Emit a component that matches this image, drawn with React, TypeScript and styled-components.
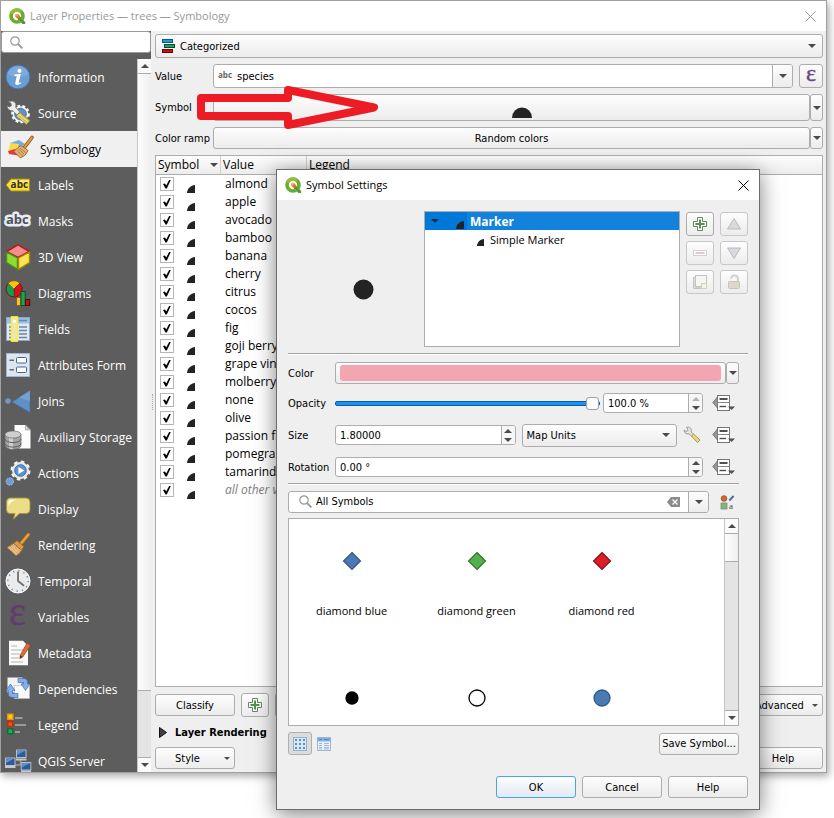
import React from "react";
import styled, { createGlobalStyle, css } from "styled-components";

const humanist = `"Open Sans", "Noto Sans", sans-serif`;
const compact = `"DejaVu Sans Condensed", "Noto Sans", sans-serif`;

const GlobalStyle = createGlobalStyle`
  *, *::before, *::after { box-sizing: border-box; }
  body { margin: 0; background: #fff; }
  body, button, input, select { font-family: ${compact}; font-size: 11px; color: #000; }
  button, input, select { margin: 0; padding: 0; }
  svg { display: block; flex: none; overflow: visible; }
`;

const edge = "#adadad";
const face = "linear-gradient(#fdfdfd, #ececec)";

/* ---------- windows ---------- */

const Desktop = styled.div`
  position: relative;
  height: 100vh;
  min-height: 680px;
  padding: 0 7px 45px 0;
  overflow: hidden;
`;

const MainWindow = styled.main`
  display: flex;
  flex-direction: column;
  height: 100%;
  border: 1px solid #a0a0a0;
  background: #efefef;
  box-shadow: 2px 3px 8px rgba(0, 0, 0, 0.35);
`;

const Dialog = styled.section`
  position: absolute;
  left: 276px;
  right: 74px;
  top: 169px;
  bottom: 8px;
  min-width: 484px;
  display: flex;
  flex-direction: column;
  border: 1px solid #6c6c6c;
  background: #efefef;
  box-shadow: 0 4px 20px rgba(0, 0, 0, 0.5);
`;

const TitleBar = styled.header<{ $muted?: boolean }>`
  display: flex;
  align-items: center;
  gap: 4px;
  height: 30px;
  flex: none;
  padding: 0 10px 0 8px;
  background: #fff;
  color: ${(p) => (p.$muted ? "#999" : "#000")};
`;

const Title = styled.h1`
  flex: 1;
  margin: 0;
  font-family: ${humanist};
  font-size: 11px;
  line-height: 14px;
  font-weight: 400;
`;

const CloseButton = styled.button`
  border: 0;
  background: none;
  color: inherit;
`;

const Columns = styled.div`
  display: flex;
  flex: 1;
  min-height: 0;
`;

/* ---------- shared controls ---------- */

const Button = styled.button<{ $width?: number; $height?: number; $primary?: boolean }>`
  display: flex;
  align-items: center;
  justify-content: center;
  flex: none;
  width: ${(p) => p.$width ?? 80}px;
  height: ${(p) => p.$height ?? 22}px;
  border: 1px solid ${(p) => (p.$primary ? "#4aa5ee" : edge)};
  border-radius: 3px;
  background: ${(p) => (p.$primary ? "linear-gradient(#fdfdfd, #e2eaf2)" : face)};
  white-space: nowrap;
`;

const MenuButton = styled(Button)`
  padding: 0 4px 0 19px;
  justify-content: space-between;
`;

const WideButton = styled(Button)<{ $tall?: boolean }>`
  flex: 1;
  width: auto;
  height: ${(p) => (p.$tall ? 27 : 22)}px;
  align-items: ${(p) => (p.$tall ? "flex-end" : "center")};
  padding: ${(p) => (p.$tall ? "0 0 2px 20px" : "0")};
`;

const DropButton = styled(Button)<{ $tall?: boolean }>`
  width: 13px;
  height: ${(p) => (p.$tall ? 27 : 22)}px;
`;

const IconButton = styled(Button)`
  width: 28px;
  height: 24px;
  &:disabled { border-color: #c8c8c8; }
`;

const FlatButton = styled.button<{ $on?: boolean }>`
  display: flex;
  align-items: center;
  justify-content: center;
  width: 24px;
  height: 23px;
  flex: none;
  border: 1px solid ${(p) => (p.$on ? "#b0b0b0" : "transparent")};
  border-radius: 3px;
  background: ${(p) => (p.$on ? "#dcdcdc" : "none")};
`;

const Frame = styled.div<{ $field?: boolean; $height?: number; $inset?: number }>`
  display: flex;
  align-items: center;
  gap: 4px;
  flex: 1;
  min-width: 0;
  height: ${(p) => p.$height ?? 24}px;
  padding-left: ${(p) => p.$inset ?? 4}px;
  border: 1px solid ${edge};
  border-radius: 3px;
  background: ${(p) => (p.$field ? "#fff" : face)};
  overflow: hidden;
`;

const plainField = css`
  flex: 1;
  min-width: 0;
  height: 100%;
  border: 0;
  outline: 0;
  background: none;
`;

const TextInput = styled.input`${plainField}`;
const Select = styled.select`${plainField} appearance: none;`;

const FieldDrop = styled.button`
  display: flex;
  align-items: center;
  justify-content: center;
  width: 20px;
  height: 100%;
  border: 0;
  border-left: 1px solid ${edge};
  background: ${face};
`;

const ClearButton = styled.button`
  padding-right: 4px;
  border: 0;
  background: none;
`;

const CaretSlot = styled.span`
  padding-right: 6px;
  pointer-events: none;
`;

const Rule = styled.hr`
  flex: none;
  width: 100%;
  height: 2px;
  margin: 0;
  border: 0;
  border-top: 1px solid #a0a0a0;
  background: #fff;
`;

const Caret = ({ up, color = "#4a4a4a", size = 8 }: { up?: boolean; color?: string; size?: number }) => (
  <svg width={size} height={size / 2} viewBox="0 0 8 4" aria-hidden>
    <path d={up ? "M0 4L4 0L8 4Z" : "M0 0H8L4 4Z"} fill={color} />
  </svg>
);

const Cross = () => (
  <svg width="11" height="11" viewBox="0 0 11 11" aria-hidden>
    <path d="M.5 .5L10.5 10.5M10.5 .5L.5 10.5" stroke="currentColor" fill="none" />
  </svg>
);

const Magnifier = () => (
  <svg width="13" height="13" viewBox="0 0 13 13" fill="none" stroke="#999" aria-hidden>
    <circle cx="5" cy="5" r="4.2" strokeWidth="1.2" />
    <path d="M8 8L12.4 12.4" strokeWidth="1.8" />
  </svg>
);

const Logo = () => (
  <svg width="17" height="17" viewBox="0 0 17 17" aria-hidden>
    <circle cx="8" cy="8" r="6" fill="none" stroke="#6aaa35" strokeWidth="3.6" />
    <path d="M2.4 5.6A6 6 0 0 1 12 3.6" fill="none" stroke="#93bd3c" strokeWidth="3.4" />
    <path d="M7 7L9.5 7L16.5 14.5V16.2H13.5L8 10Z" fill="#fff" />
    <path d="M9 8.7L11.3 8.7L16.2 14V16H13.5L9 11.2Z" fill="#589632" />
    <path d="M6.4 6.2H9.4L11.2 8.4L9 11L6.4 9Z" fill="#ee7913" />
    <path d="M6.4 6.2H8.4V8.2H6.4Z" fill="#f8b25c" />
  </svg>
);

const Plus = () => (
  <svg width="16" height="16" viewBox="0 0 16 16" aria-hidden>
    <path d="M5.5 1.5H10.5V5.5H14.5V10.5H10.5V14.5H5.5V10.5H1.5V5.5H5.5Z" fill="#fff" stroke="#5b8c5a" />
    <path d="M8 3.5V12.5M3.5 8H12.5" stroke="#5b8c5a" strokeWidth="2" />
  </svg>
);

const QuarterDot = ({ size = 8 }: { size?: number }) => (
  <svg width={size} height={size} viewBox="0 0 8 8" aria-hidden>
    <path d="M0 8C.3 3.8 3 .6 8 0V8Z" fill="#232323" />
  </svg>
);

/* ---------- sidebar ---------- */

const Sidebar = styled.aside`
  display: flex;
  flex-direction: column;
  width: 150px;
  flex: none;
  background: #5d5d5d;
`;

const SearchBox = styled.label`
  display: flex;
  align-items: center;
  gap: 6px;
  height: 22px;
  margin-bottom: 6px;
  padding-left: 8px;
  flex: none;
  background: #fff;
  border: 1px solid #9a9a9a;
  border-radius: 3px;
`;

const NavArea = styled.div`
  display: flex;
  flex: 1;
  min-height: 0;
`;

const NavList = styled.nav`
  flex: 1;
  overflow: hidden;
`;

const NavItem = styled.a<{ $active?: boolean }>`
  display: flex;
  align-items: center;
  gap: 7px;
  height: 36px;
  padding-left: 4px;
  font-family: ${humanist};
  font-size: 12px;
  text-decoration: none;
  white-space: nowrap;
  color: ${(p) => (p.$active ? "#000" : "#fff")};
  background: ${(p) => (p.$active ? "#f0f0f0" : "none")};
`;

const ScrollBar = styled.div`
  display: flex;
  flex-direction: column;
  width: 14px;
  flex: none;
  background: #e4e4e4;
  border-left: 1px solid #c6c6c6;
`;

const ScrollEnd = styled.button`
  display: flex;
  align-items: center;
  justify-content: center;
  height: 14px;
  flex: none;
  border: 0;
  background: #fafafa;
`;

const Thumb = styled.div<{ $share: number }>`
  flex: ${(p) => p.$share};
  border: solid ${edge};
  border-width: 1px 0;
  background: linear-gradient(90deg, #fdfdfd, #efefef);
`;

const Track = styled.div<{ $share: number }>`
  flex: ${(p) => p.$share};
  border-bottom: 1px solid ${edge};
`;

const art: Record<string, React.ReactNode> = {
  Information: (
    <>
      <circle cx="13" cy="13" r="12" fill="#6b9fd4" stroke="#3f72ad" />
      <path d="M2.5 10A11 11 0 0 1 23.5 10C17 14 9 14 2.5 10Z" fill="#8ab4e0" opacity=".6" />
      <circle cx="14.5" cy="6.8" r="2.1" fill="#fff" />
      <path d="M9.5 10.5L15.8 10L13.8 18.2Q13.6 19.5 16.3 18.2L16 19.5Q11.5 22 10.3 20Q10 19.3 11.8 12.3L9.2 11.7Z" fill="#fff" />
    </>
  ),
  Source: (
    <>
      <circle cx="15.5" cy="14" r="7.8" fill="#f0f0f0" stroke="#fff" strokeWidth="3" strokeDasharray="2.6 2.2" />
      <circle cx="15.5" cy="14" r="5.8" fill="#5f90c6" stroke="#47719f" />
      <path d="M2 6Q5 8 6.5 5.5Q7 3 3.5 1.8Q8-.2 10.5 3Q11.2 5 10.6 7.2L14.8 12L12 14.8L7.4 10.6Q3 11 2 6Z" fill="#ececec" stroke="#777" strokeWidth=".7" />
      <path d="M11 16L15 12.5L25 20.5L21.5 24.5Z" fill="#e9d87c" stroke="#8c7b2e" strokeWidth=".8" />
      <path d="M14 16L22 22.5M16 14.5L23.8 20.8" stroke="#b29d46" strokeWidth=".7" />
    </>
  ),
  Symbology: (
    <>
      <path d="M5 7L14 4L20 8L14 13Z" fill="#75aee3" />
      <path d="M5 7L14 8L11 18L3.5 15Z" fill="#f6dc4d" />
      <path d="M3 15L10 13L16 20L4 18Z" fill="#e23b3b" />
      <path d="M27 1.5L19.3 11.6" stroke="#8f5820" strokeWidth="3.6" strokeLinecap="round" />
      <path d="M26.8 1.6L19.3 11.6" stroke="#e29a43" strokeWidth="2" strokeLinecap="round" />
      <path d="M16 9.5L23 14.5Q21 20 15.5 22L9 15.5Q13 11 16 9.5Z" fill="#e3b375" stroke="#9b6728" strokeWidth=".9" />
      <path d="M15 12L20.5 16.5M12 14.5L17.5 20M13.5 13L19 18" stroke="#a56c2c" strokeWidth=".8" />
    </>
  ),
  Labels: (
    <>
      <path d="M1 13L6 7H24.5V19H6Z" fill="#f7df37" stroke="#a58c12" />
      <path d="M5 13L7 8H24V11L6 13Z" fill="#fff" opacity=".35" />
      <text x="5.6" y="16.4" fontSize="10" fontWeight="700" fill="#3a3510" fontFamily="Open Sans, sans-serif">abc</text>
    </>
  ),
  Masks: (
    <text x="1" y="16" fontSize="13" fontWeight="700" fill="#4e535b" stroke="#e9ecf5" strokeWidth="5" strokeLinejoin="round" paintOrder="stroke" fontFamily="Open Sans, sans-serif">abc</text>
  ),
  "3D View": (
    <>
      <path d="M13 .8L24.5 7.5L13 13.5L1.5 7.5Z" fill="#f58f8f" stroke="#b11f1f" strokeWidth="1.6" strokeLinejoin="round" />
      <path d="M1.5 8L12.5 14V25.3L1.5 18.5Z" fill="#8edb35" stroke="#4f8f13" strokeWidth="1.4" strokeLinejoin="round" />
      <path d="M24.5 8L13.5 14V25.3L24.5 18.5Z" fill="#fbe650" stroke="#a8870f" strokeWidth="1.4" strokeLinejoin="round" />
    </>
  ),
  Diagrams: (
    <>
      <circle cx="9" cy="9" r="8" fill="#159c4c" stroke="#7d1010" />
      <path d="M9 9L3.2 3.2A8.2 8.2 0 0 1 14.8 3.2Z" fill="#f9c40f" stroke="#8a6c08" strokeWidth=".7" />
      <path d="M9 9L14.8 3.2A8.2 8.2 0 0 1 9.5 17.2Z" fill="#d21414" stroke="#7d1010" strokeWidth=".7" />
      <rect x="11.5" y="17.5" width="4.2" height="8" fill="#f4c430" stroke="#9b5a10" />
      <rect x="16" y="11.5" width="4.2" height="14" fill="#1aa352" stroke="#0d4f28" />
      <rect x="20.5" y="19.5" width="4.2" height="6" fill="#b51414" stroke="#5c0909" />
    </>
  ),
  Fields: (
    <>
      <rect x="1.5" y="1.5" width="23" height="23" fill="#e3e8ee" stroke="#8ba7c4" />
      <rect x="2" y="2" width="22" height="5.5" fill="#9cc0e2" />
      <path d="M14 4.5H22M4 11H6.5M4 14.5H6.5M4 18H6.5M4 21.5H6.5M14 11H22M14 14.5H22M14 18H22M14 21.5H22" stroke="#6888ab" strokeWidth="1.4" />
      <rect x="6.5" y=".8" width="6" height="24.4" fill="#f0e8a9" stroke="#f7ee3d" strokeWidth="1.4" />
      <rect x="8" y="4" width="3" height="2.6" fill="#fff" />
    </>
  ),
  "Attributes Form": (
    <>
      <rect x="1.5" y="1.5" width="23" height="23" fill="#dfe5ec" stroke="#9eb9d6" />
      <rect x="11.5" y="5.5" width="10" height="5.5" rx="1" fill="#fff" stroke="#42698f" />
      <rect x="11.5" y="15" width="10" height="5.5" rx="1" fill="#fff" stroke="#42698f" />
      <path d="M4.5 8.2H9M4.5 17.8H9" stroke="#5d6c7c" strokeWidth="1.6" />
    </>
  ),
  Joins: (
    <>
      <path d="M7 14L25 2.5V24.5Z" fill="#5f91c8" stroke="#43709f" strokeWidth=".7" />
      <path d="M14 9.5L25 2.5V13Z" fill="#83abd7" opacity=".6" />
      <circle cx="3" cy="13" r="2.8" fill="#7197c2" />
    </>
  ),
  "Auxiliary Storage": (
    <>
      <path d="M9.5 1H20.5L25.5 6V24.5H9.5Z" fill="#fcfcfc" />
      <path d="M20.5 1V6H25.5Z" fill="#c9c9c9" stroke="#888" strokeWidth=".5" />
      <path d="M0 10.5V21.5A8 3.8 0 0 0 16 21.5V10.5Z" fill="#a3a3a3" stroke="#666" strokeWidth=".7" />
      <path d="M4 12V24.4Q6 25.5 8 25.2V13Z" fill="#d8d8d8" opacity=".8" />
      <ellipse cx="8" cy="10.5" rx="8" ry="3.6" fill="#cfcfcf" stroke="#6b6b6b" strokeWidth=".7" />
      <path d="M0 15A8 3.6 0 0 0 16 15M0 19.5A8 3.6 0 0 0 16 19.5" fill="none" stroke="#606060" />
    </>
  ),
  Actions: (
    <>
      <circle cx="15.5" cy="10.5" r="8.4" fill="#e9e9e9" stroke="#f2f2f2" strokeWidth="3.2" strokeDasharray="3.4 3.2" />
      <circle cx="15.5" cy="10.5" r="8" fill="#e8e8e8" />
      <circle cx="15.5" cy="10.5" r="5.8" fill="#5d93cf" stroke="#426d9e" />
      <path d="M13.4 6.9L19.4 10.5L13.4 14.1Z" fill="#fff" />
      <circle cx="4.8" cy="21.5" r="3.7" fill="#6f9ecf" stroke="#bccde0" strokeDasharray="1.5 1.2" />
    </>
  ),
  Display: (
    <>
      <path d="M5 2H21Q25 2 25 6V13.5Q25 17.5 21 17.5H14.5L8.5 23L10 17.5H5Q1.5 17.5 1.5 13.5V6Q1.5 2 5 2Z" fill="#ecdd87" stroke="#aa9535" strokeWidth=".9" />
      <path d="M3.5 10V6.5Q3.5 3.8 6 3.8H12Q5 5 3.5 10Z" fill="#fff" />
    </>
  ),
  Rendering: (
    <>
      <path d="M23.5 2.5L15.5 12" stroke="#a7691a" strokeWidth="3.8" strokeLinecap="round" />
      <path d="M23.3 2.7L15.5 12" stroke="#eda036" strokeWidth="2.4" strokeLinecap="round" />
      <path d="M12 8.5L19 14.5L16.5 18.5L8.5 11.5Z" fill="#dc9a44" stroke="#945d18" strokeWidth=".8" />
      <path d="M8.5 11.5L16.5 18.5Q14.5 22 11 23.8L2 15.5Z" fill="#e9bd83" stroke="#a16c2a" strokeWidth=".8" />
      <path d="M5 14L13 21.5M7 12.5L14.8 19.8M4 17L10 22" stroke="#b88247" strokeWidth=".8" strokeDasharray="1 1" />
    </>
  ),
  Temporal: (
    <>
      <circle cx="13" cy="13" r="12" fill="#ebebeb" stroke="#fafafa" />
      <circle cx="13" cy="13" r="10.2" fill="none" stroke="#6a93bd" strokeWidth="1.6" strokeDasharray="1.3 4.04" />
      <path d="M13 3.5V13L19 17.8" fill="none" stroke="#707070" strokeWidth="1.8" />
    </>
  ),
  Variables: (
    <text x="4" y="21" fontSize="40" fill="#603d6c" stroke="#603d6c" strokeWidth=".6" fontFamily="Liberation Serif, serif">ε</text>
  ),
  Metadata: (
    <>
      <path d="M4 .8H18L23 6V25.2H4Z" fill="#fafafa" />
      <path d="M6 6H12M6 10H19M6 14H15M6 18H14M6 22H18" stroke="#b3b3b3" strokeWidth="1.2" />
      <path d="M22 3L25.5 5.5L17.7 17L14.8 18.5L15.4 15Z" fill="#e06d33" stroke="#97401a" strokeWidth=".7" />
      <path d="M14.8 18.5L15.4 15L17.7 17Z" fill="#4b3a30" />
    </>
  ),
  Dependencies: (
    <>
      <rect x="2.5" y="1.5" width="15" height="15" fill="#f3f3f3" />
      <rect x="9.5" y="9.5" width="15" height="13" fill="#fafafa" stroke="#bdbdbd" strokeWidth=".6" />
      <path d="M13 2.5H19Q22.5 2.5 22.5 6V8H25L20.5 14.5L16 8H18.5V6.5H13Z" fill="#84aee8" stroke="#4477b9" strokeWidth=".7" />
      <path d="M13 21.5H8Q3.5 21.5 3.5 18V14.5H1L5.5 8L10 14.5H7.5V17.5H13Z" fill="#84aee8" stroke="#4477b9" strokeWidth=".7" />
    </>
  ),
  Legend: (
    <>
      <rect x="2.8" y="2.2" width="5" height="5" fill="#fbd500" stroke="#f39a13" strokeWidth="1.4" />
      <rect x="2.8" y="9.5" width="5" height="5" fill="#fa4b18" stroke="#c02e06" strokeWidth="1.4" />
      <rect x="2.8" y="16.8" width="5" height="5" fill="#16b45b" stroke="#087237" strokeWidth="1.4" />
      <path d="M10 6H17.5M10 13H21M10 20H15" stroke="#9a9a9a" strokeWidth="1.8" />
    </>
  ),
  "QGIS Server": (
    <>
      <path d="M15.5 11V17M5 17H21" stroke="#9a9a9a" strokeWidth="1.4" />
      <rect x="11.5" y="2" width="9.5" height="7.5" fill="#2c5a9a" stroke="#b7bfc8" />
      <rect x="0.5" y="10" width="9.5" height="7.5" fill="#2c5a9a" stroke="#b7bfc8" />
      <rect x="16.3" y="14.5" width="9.5" height="7.5" fill="#2c5a9a" stroke="#b7bfc8" />
      <path d="M12 2.5H20.5L12 7ZM1 10.5H9.5L1 15ZM16.8 15H25.3L16.8 19.5Z" fill="#5e90cd" />
      <path d="M11 11.5H21.5M0 19H10.5M16 23.5H26" stroke="#c9c9c9" strokeWidth="2" />
    </>
  ),
};

const NavIcon = ({ name }: { name: string }) => {
  const width = name === "Symbology" ? 28 : 26;
  return (
    <svg width={width} height="26" viewBox={`0 0 ${width} 26`} aria-hidden>
      {art[name]}
    </svg>
  );
};

/* ---------- properties pane ---------- */

const Splitter = styled.div`
  display: flex;
  align-items: center;
  width: 4px;
  flex: none;
  &::after {
    content: "";
    height: 16px;
    margin-left: 1px;
    border-left: 1px dotted #aaa;
  }
`;

const Pane = styled.div`
  display: flex;
  flex-direction: column;
  gap: 6px;
  flex: 1;
  min-width: 0;
  padding: 3px;
  padding-left: 0;
`;

const FormRow = styled.div<{ $gap?: number }>`
  display: flex;
  align-items: center;
  gap: ${(p) => p.$gap ?? 6}px;
  flex: none;
`;

const Caption = styled.label`
  width: 58px;
  flex: none;
  white-space: nowrap;
`;

const FormField = styled.div<{ $gap?: number }>`
  display: flex;
  gap: ${(p) => p.$gap ?? 0}px;
  flex: 1;
  min-width: 0;
`;

const CategoryBox = styled.div`
  flex: 1;
  min-height: 0;
  overflow: hidden;
  border: 1px solid ${edge};
  background: #fff;
`;

const CategoryTable = styled.table`
  width: 100%;
  border-collapse: separate;
  border-spacing: 0;
  table-layout: fixed;
  font-family: ${humanist};
  font-size: 12px;
`;

const HeadCell = styled.th<{ $width?: number }>`
  width: ${(p) => (p.$width ? `${p.$width}px` : "auto")};
  height: 19px;
  padding: 0 2px;
  font-weight: 400;
  text-align: left;
  line-height: 18px;
  background: ${face};
  border-bottom: 1px solid ${edge};
  border-right: 1px solid #cfcfcf;
  &:last-child { border-right: 0; }
`;

const SortHead = styled.div`
  display: flex;
  align-items: center;
  justify-content: space-between;
`;

const Cell = styled.td<{ $other?: boolean }>`
  height: 18px;
  padding: 0 0 0 4px;
  line-height: 18px;
  white-space: nowrap;
  color: ${(p) => (p.$other ? "#808080" : "#000")};
  font-style: ${(p) => (p.$other ? "italic" : "normal")};
`;

const SymbolCell = styled.div`
  display: flex;
  align-items: flex-end;
  gap: 13px;
  height: 18px;
`;

const Check = styled.input`
  appearance: none;
  display: grid;
  place-items: center;
  width: 14px;
  height: 14px;
  margin-bottom: 2px;
  border: 1px solid #b5b5b5;
  background: #fff;
  &:checked::after {
    content: "";
    width: 8px;
    height: 9px;
    background: #000;
    clip-path: polygon(0 50%, 25% 45%, 40% 68%, 80% 0, 100% 0, 48% 100%, 32% 100%);
  }
`;

const GroupTitle = styled.button`
  display: flex;
  align-items: center;
  gap: 8px;
  height: 18px;
  flex: none;
  padding-left: 4px;
  border: 0;
  background: none;
  font-weight: 700;
`;

const Spread = styled.div`
  display: flex;
  align-items: center;
  justify-content: space-between;
  flex: none;
`;

/* ---------- dialog ---------- */

const DialogBody = styled.div`
  display: flex;
  flex-direction: column;
  flex: 1;
  min-height: 0;
  padding: 11px;
`;

const Inner = styled.div`
  display: flex;
  flex-direction: column;
  flex: 1;
  min-height: 0;
  padding: 4px 9px 0 0;
`;

const TopArea = styled.div`
  display: flex;
  gap: 6px;
  height: 136px;
  margin-bottom: 6px;
  flex: none;
`;

const Preview = styled.div`
  display: grid;
  place-items: center;
  width: 130px;
  padding: 21px 0 0 21px;
  flex: none;
`;

const Tree = styled.ul`
  flex: 1;
  margin: 0;
  padding: 0;
  list-style: none;
  border: 1px solid ${edge};
  background: #fff;
  font-family: ${humanist};
`;

const TreeItem = styled.li<{ $root?: boolean }>`
  display: flex;
  align-items: center;
  gap: 6px;
  height: 18px;
  padding-left: ${(p) => (p.$root ? 6 : 52)}px;
  background: ${(p) => (p.$root ? "linear-gradient(90deg, #0078d7 42px, #1282dd 42px)" : "none")};
  color: ${(p) => (p.$root ? "#fff" : "#000")};
  font-size: ${(p) => (p.$root ? 12 : 11)}px;
  font-weight: ${(p) => (p.$root ? 700 : 400)};
`;

const TreeGlyph = styled.span<{ $root?: boolean }>`
  display: flex;
  justify-content: flex-end;
  align-items: flex-end;
  height: 18px;
  width: ${(p) => (p.$root ? 19 : 7)}px;
  padding-bottom: ${(p) => (p.$root ? 1 : 2)}px;
`;

const ToolGrid = styled.div`
  display: grid;
  grid-template-columns: 28px 28px;
  gap: 5px 6px;
  align-content: start;
  padding-top: 1px;
`;

const SettingRow = styled.div<{ $short?: boolean }>`
  display: flex;
  align-items: center;
  height: ${(p) => (p.$short ? 28 : 32)}px;
  flex: none;
`;

const SettingLabel = styled.label`
  width: 47px;
  flex: none;
`;

const SettingField = styled.div<{ $gap?: number }>`
  display: flex;
  align-items: center;
  gap: ${(p) => p.$gap ?? 0}px;
  flex: 1;
  min-width: 0;
`;

const Swatch = styled.span`
  flex: 1;
  height: 16px;
  margin: 0 4px;
  border-radius: 3px;
  background: #f4a5b2;
`;

const Slider = styled.input`
  appearance: none;
  flex: 1;
  min-width: 0;
  height: 14px;
  background: none;
  &::-webkit-slider-runnable-track {
    height: 5px;
    border: 1px solid #0d5ca8;
    border-radius: 2px;
    background: #1e90f0;
  }
  &::-webkit-slider-thumb {
    appearance: none;
    width: 13px;
    height: 13px;
    margin-top: -5px;
    border: 1px solid #a0a0a0;
    border-radius: 3px;
    background: #fcfcfc;
  }
`;

const SpinBox = styled(Frame)<{ $fixed?: boolean }>`
  height: 20px;
  flex: ${(p) => (p.$fixed ? "0 0 100px" : "181")};
`;

const UnitBox = styled(Frame)`
  height: 23px;
  flex: 155;
`;

const Steps = styled.span`
  display: flex;
  flex-direction: column;
  width: 14px;
  height: 100%;
  border-left: 1px solid ${edge};
`;

const Step = styled.button`
  display: grid;
  place-items: center;
  flex: 1;
  border: 0;
  background: #f6f6f6;
`;

const OverrideButton = styled.button`
  width: 36px;
  padding-left: 9px;
  border: 0;
  background: none;
  flex: none;
`;

const FilterRow = styled.div`
  display: flex;
  align-items: center;
  gap: 6px;
  margin: 5px 0;
  flex: none;
`;

const Gallery = styled.div`
  display: flex;
  flex: 1;
  min-height: 0;
  border: 1px solid ${edge};
  background: #fff;
`;

const GalleryGrid = styled.div`
  display: grid;
  grid-template-columns: repeat(3, 125px);
  grid-auto-rows: 137px;
  flex: 1;
  min-width: 0;
  overflow: hidden;
  font-family: ${humanist};
`;

const GalleryItem = styled.figure`
  display: flex;
  flex-direction: column;
  align-items: center;
  gap: 31px;
  margin: 0;
  padding-top: 31px;
`;

const GalleryBar = styled(Spread)`
  margin-top: 6px;
`;

const Footer = styled.footer`
  display: flex;
  justify-content: flex-end;
  gap: 6px;
  margin-top: 21px;
  flex: none;
`;

const ViewToggles = styled.div`
  display: flex;
`;

const Arrow = styled.svg`
  position: absolute;
  left: 196px;
  top: 84px;
  pointer-events: none;
`;

const OverrideIcon = () => (
  <svg width="24" height="18" viewBox="0 0 24 18" aria-hidden>
    <path d="M5.5 3L.8 8.5L5.5 14Z" fill="#999" stroke="#777" />
    <rect x="5.5" y="1.5" width="12" height="15" fill="#fff" stroke="#777" />
    <path d="M5.5 8.5H17.5" stroke="#888" />
    <path d="M7.5 5H15.5" stroke="#505050" strokeWidth="2" />
    <path d="M7.5 12.5H14" stroke="#505050" strokeWidth="1.4" />
    <path d="M16 12.5H23L19.5 16Z" fill="#505050" />
  </svg>
);

const Epsilon = () => (
  <svg width="14" height="16" viewBox="0 0 14 16" aria-hidden>
    <text x="2" y="13" fontSize="24" fill="#6d4481" stroke="#6d4481" strokeWidth=".4" fontFamily="Liberation Serif, serif">ε</text>
  </svg>
);

const Spin = ({ id, value, fixed, dim }: { id: string; value: string; fixed?: boolean; dim?: boolean }) => (
  <SpinBox $field $fixed={fixed}>
    <TextInput id={id} defaultValue={value} />
    <Steps>
      <Step aria-label="Increase"><Caret up color={dim ? "#b4b4b4" : "#4a4a4a"} /></Step>
      <Step aria-label="Decrease"><Caret /></Step>
    </Steps>
  </SpinBox>
);

const Override = () => (
  <OverrideButton aria-label="Data defined override"><OverrideIcon /></OverrideButton>
);

const values = [
  "almond", "apple", "avocado", "bamboo", "banana", "cherry", "citrus", "cocos", "fig",
  "goji berry", "grape vine", "molberry", "none", "olive", "passion fruit", "pomegranate",
  "tamarind", "all other values",
];

const symbols = [
  { id: 1, label: "diamond blue", fill: "#4a7ab5", stroke: "#325780" },
  { id: 2, label: "diamond green", fill: "#54b04a", stroke: "#357230" },
  { id: 3, label: "diamond red", fill: "#db1e2a", stroke: "#801119" },
  { id: 4, fill: "#000", stroke: "#000", r: 6 },
  { id: 5, fill: "#fff", stroke: "#000", r: 8 },
  { id: 6, fill: "#487bb6", stroke: "#325780", r: 8 },
];

export default function App() {
  return (
    <Desktop>
      <GlobalStyle />
      <MainWindow>
        <TitleBar $muted>
          <Logo />
          <Title>Layer Properties — trees — Symbology</Title>
          <CloseButton aria-label="Close"><Cross /></CloseButton>
        </TitleBar>
        <Columns>
          <Sidebar>
            <SearchBox>
              <Magnifier />
              <TextInput aria-label="Search" />
            </SearchBox>
            <NavArea>
              <NavList>
                {Object.keys(art).map((name) => (
                  <NavItem key={name} href="#" $active={name === "Symbology"}>
                    <NavIcon name={name} />
                    {name}
                  </NavItem>
                ))}
              </NavList>
              <ScrollBar>
                <ScrollEnd aria-label="Scroll up"><Caret up /></ScrollEnd>
                <Thumb $share={619} />
                <Track $share={66} />
                <ScrollEnd aria-label="Scroll down"><Caret /></ScrollEnd>
              </ScrollBar>
            </NavArea>
          </Sidebar>
          <Splitter />
          <Pane>
            <FormRow>
              <Frame>
                <svg width="16" height="16" viewBox="0 0 16 16" aria-hidden>
                  <rect x="2.5" y="1.5" width="10" height="3" fill="#15a2c7" stroke="#17508c" />
                  <rect x="4.5" y="6.5" width="10" height="3" fill="#16a66a" stroke="#0a4a2d" />
                  <rect x="2.5" y="11.5" width="10" height="3" fill="#c51313" stroke="#650808" />
                </svg>
                <Select aria-label="Renderer"><option>Categorized</option></Select>
                <CaretSlot><Caret /></CaretSlot>
              </Frame>
            </FormRow>
            <FormRow $gap={0}>
              <Caption htmlFor="value">Value</Caption>
              <FormField $gap={6}>
                <Frame $field>
                  <svg width="15" height="14" viewBox="0 0 15 14" aria-hidden>
                    <text x="0" y="9" fontSize="8" fontWeight="700" fill="#666" fontFamily="Open Sans, sans-serif">abc</text>
                  </svg>
                  <TextInput id="value" defaultValue="species" />
                  <FieldDrop aria-label="Choose field"><Caret /></FieldDrop>
                </Frame>
                <Button $width={24} $height={24} aria-label="Expression"><Epsilon /></Button>
              </FormField>
            </FormRow>
            <FormRow $gap={0}>
              <Caption htmlFor="symbol">Symbol</Caption>
              <FormField>
                <WideButton $tall id="symbol" aria-label="Change symbol">
                  <svg width="20" height="11" viewBox="0 0 20 11" aria-hidden>
                    <path d="M0 11A10 10.5 0 0 1 20 11Z" fill="#232323" />
                  </svg>
                </WideButton>
                <DropButton $tall aria-label="Symbol menu"><Caret /></DropButton>
              </FormField>
            </FormRow>
            <FormRow $gap={0}>
              <Caption htmlFor="ramp">Color ramp</Caption>
              <FormField>
                <WideButton id="ramp">Random colors</WideButton>
                <DropButton aria-label="Color ramp menu"><Caret /></DropButton>
              </FormField>
            </FormRow>
            <CategoryBox>
              <CategoryTable>
                <thead>
                  <tr>
                    <HeadCell $width={65}><SortHead>Symbol<Caret /></SortHead></HeadCell>
                    <HeadCell $width={86}>Value</HeadCell>
                    <HeadCell>Legend</HeadCell>
                  </tr>
                </thead>
                <tbody>
                  {values.map((v, i) => (
                    <tr key={v}>
                      <Cell>
                        <SymbolCell>
                          <Check type="checkbox" defaultChecked aria-label={v} />
                          <QuarterDot />
                        </SymbolCell>
                      </Cell>
                      <Cell $other={i === values.length - 1}>{v}</Cell>
                      <Cell />
                    </tr>
                  ))}
                </tbody>
              </CategoryTable>
            </CategoryBox>
            <Spread>
              <FormRow>
                <Button>Classify</Button>
                <IconButton aria-label="Add"><Plus /></IconButton>
                <IconButton aria-label="Remove" />
              </FormRow>
              <MenuButton $width={88}>Advanced<Caret size={6} /></MenuButton>
            </Spread>
            <GroupTitle>
              <svg width="8" height="11" viewBox="0 0 8 11" aria-hidden>
                <path d="M.5 .5L7.5 5.5L.5 10.5Z" fill="#404040" stroke="#111" />
              </svg>
              Layer Rendering
            </GroupTitle>
            <Spread>
              <MenuButton>Style<Caret size={6} /></MenuButton>
              <Button>Help</Button>
            </Spread>
          </Pane>
        </Columns>
      </MainWindow>

      <Arrow width="186" height="48" viewBox="0 0 186 48" aria-hidden>
        <path
          d="M5 14H92V6L178 23.5L92 41V32H5Z"
          fill="none"
          stroke="#ed1c24"
          strokeWidth="8"
          strokeLinejoin="round"
        />
      </Arrow>

      <Dialog role="dialog" aria-label="Symbol Settings">
        <TitleBar>
          <Logo />
          <Title>Symbol Settings</Title>
          <CloseButton aria-label="Close"><Cross /></CloseButton>
        </TitleBar>
        <DialogBody>
          <TopArea>
            <Preview>
              <svg width="21" height="21" viewBox="0 0 21 21" aria-hidden>
                <circle cx="10.5" cy="10.5" r="10" fill="#232323" />
              </svg>
            </Preview>
            <Tree>
              <TreeItem $root>
                <Caret color="#0b2e4f" />
                <TreeGlyph $root><QuarterDot /></TreeGlyph>
                Marker
              </TreeItem>
              <TreeItem>
                <TreeGlyph><QuarterDot size={7} /></TreeGlyph>
                Simple Marker
              </TreeItem>
            </Tree>
            <ToolGrid>
              <IconButton aria-label="Add layer"><Plus /></IconButton>
              <IconButton disabled aria-label="Move up">
                <svg width="16" height="16" viewBox="0 0 16 16"><path d="M1.5 13L8 2.5L14.5 13Z" fill="#d7d9dc" stroke="#b9bcc0" /></svg>
              </IconButton>
              <IconButton disabled aria-label="Remove layer">
                <svg width="16" height="16" viewBox="0 0 16 16"><rect x="1.5" y="5.5" width="13" height="5" fill="#fff" stroke="#d9cfcf" /><path d="M3.5 8H12.5" stroke="#dacfcf" strokeWidth="2" /></svg>
              </IconButton>
              <IconButton disabled aria-label="Move down">
                <svg width="16" height="16" viewBox="0 0 16 16"><path d="M1.5 3L8 13.5L14.5 3Z" fill="#d7d9dc" stroke="#b9bcc0" /></svg>
              </IconButton>
              <IconButton disabled aria-label="Duplicate layer">
                <svg width="16" height="16" viewBox="0 0 16 16">
                  <path d="M1.5 3.5H4V13H11V14.5H1.5Z" fill="#dcdcdc" stroke="#c4c4c4" />
                  <rect x="3.5" y="1.5" width="11" height="11" fill="#f6f6f6" stroke="#c2c2c2" />
                  <rect x="9.5" y="9.5" width="5" height="5" fill="#f3f1e8" stroke="#d4d0bc" />
                </svg>
              </IconButton>
              <IconButton disabled aria-label="Lock color">
                <svg width="16" height="16" viewBox="0 0 16 16">
                  <path d="M5 4.5Q5.5 1.5 8.5 1.5Q12 1.5 12 5V8" fill="none" stroke="#cfcfcf" strokeWidth="2" />
                  <rect x="2.5" y="7.5" width="11" height="7" rx="1" fill="#dbd8ca" stroke="#c8c5b6" />
                </svg>
              </IconButton>
            </ToolGrid>
          </TopArea>
          <Rule />
          <Inner>
            <SettingRow $short>
              <SettingLabel htmlFor="color">Color</SettingLabel>
              <SettingField>
                <WideButton id="color" aria-label="Color"><Swatch /></WideButton>
                <DropButton aria-label="Color menu"><Caret /></DropButton>
              </SettingField>
            </SettingRow>
            <SettingRow>
              <SettingLabel htmlFor="opacity">Opacity</SettingLabel>
              <SettingField $gap={3}>
                <Slider type="range" min={0} max={100} defaultValue={100} aria-label="Opacity slider" />
                <Spin id="opacity" value="100.0 %" fixed dim />
              </SettingField>
              <Override />
            </SettingRow>
            <SettingRow>
              <SettingLabel htmlFor="size">Size</SettingLabel>
              <SettingField $gap={6}>
                <Spin id="size" value="1.80000" />
                <UnitBox>
                  <Select aria-label="Unit"><option>Map Units</option></Select>
                  <CaretSlot><Caret /></CaretSlot>
                </UnitBox>
                <svg width="20" height="18" viewBox="0 0 20 18" aria-hidden>
                  <path d="M1 4Q3 6.5 4.8 4.8Q5.4 3 3.4 1.2Q7.4.3 8.4 4L8 6L10.8 8.4L8.6 10.4L6.2 7.8Q1.6 8.8 1 4Z" fill="#e6e6e6" stroke="#8a8a8a" strokeWidth=".8" />
                  <path d="M8.4 10L10.6 8L17 14L14.6 16.6Z" fill="#ecd97a" stroke="#9a8635" strokeWidth=".8" />
                </svg>
              </SettingField>
              <Override />
            </SettingRow>
            <SettingRow>
              <SettingLabel htmlFor="rotation">Rotation</SettingLabel>
              <SettingField><Spin id="rotation" value="0.00 °" /></SettingField>
              <Override />
            </SettingRow>
            <Rule />
            <FilterRow>
              <Frame $field $height={22} $inset={10}>
                <Magnifier />
                <TextInput aria-label="Symbol group" defaultValue="All Symbols" />
                <ClearButton aria-label="Clear">
                  <svg width="13" height="10" viewBox="0 0 13 10" aria-hidden>
                    <path d="M0 5L4 0H13V10H4Z" fill="#8c8c8c" />
                    <path d="M5.5 2.5L10.5 7.5M10.5 2.5L5.5 7.5" stroke="#fff" strokeWidth="1.2" />
                  </svg>
                </ClearButton>
                <FieldDrop aria-label="Symbol groups"><Caret /></FieldDrop>
              </Frame>
              <FlatButton aria-label="Style manager">
                <svg width="16" height="16" viewBox="0 0 16 16" aria-hidden>
                  <circle cx="5" cy="4.5" r="2.8" fill="#d9662d" stroke="#9e4214" strokeWidth=".8" />
                  <path d="M10.3 6.5L14.6 2" stroke="#4a6f9c" strokeWidth="2" />
                  <rect x="2" y="9" width="6" height="6" fill="#86b082" stroke="#6f9a6c" strokeWidth=".8" />
                  <text x="10" y="15" fontSize="9" fill="#444" fontFamily="Liberation Serif, serif">a</text>
                </svg>
              </FlatButton>
            </FilterRow>
            <Gallery>
              <GalleryGrid>
                {symbols.map((s) => (
                  <GalleryItem key={s.id}>
                    <svg width="22" height="22" viewBox="0 0 22 22" aria-hidden>
                      {s.r ? (
                        <circle cx="11" cy="11" r={s.r} fill={s.fill} stroke={s.stroke} strokeWidth="1.3" />
                      ) : (
                        <path d="M11 2.5L19.5 11L11 19.5L2.5 11Z" fill={s.fill} stroke={s.stroke} strokeWidth="1.2" />
                      )}
                    </svg>
                    {s.label && <figcaption>{s.label}</figcaption>}
                  </GalleryItem>
                ))}
              </GalleryGrid>
              <ScrollBar>
                <ScrollEnd aria-label="Scroll up"><Caret up /></ScrollEnd>
                <Thumb $share={28} />
                <Track $share={152} />
                <ScrollEnd aria-label="Scroll down"><Caret /></ScrollEnd>
              </ScrollBar>
            </Gallery>
            <GalleryBar>
              <ViewToggles>
                <FlatButton $on aria-label="Icon view">
                  <svg width="14" height="14" viewBox="0 0 14 14" aria-hidden>
                    <rect x=".5" y=".5" width="13" height="13" fill="#dbe7f3" stroke="#8fb2d4" />
                    <path d="M2 3H12M2 7H12M2 11H12" stroke="#5c8fc2" strokeWidth="2" strokeDasharray="2 2" />
                  </svg>
                </FlatButton>
                <FlatButton aria-label="List view">
                  <svg width="14" height="14" viewBox="0 0 14 14" aria-hidden>
                    <rect x=".5" y=".5" width="13" height="13" fill="#e9eff5" stroke="#9dbbd8" />
                    <path d="M0 2.5H14" stroke="#86b3dd" strokeWidth="4" />
                    <path d="M2 2.5H5M7 2.5H12" stroke="#4d86bd" />
                    <path d="M2 6.5H5M2 8.5H5M2 10.5H5M2 12H5M7 6.5H12M7 8.5H12M7 10.5H12M7 12H12" stroke="#9dbbd8" />
                  </svg>
                </FlatButton>
              </ViewToggles>
              <Button>Save Symbol...</Button>
            </GalleryBar>
          </Inner>
          <Footer>
            <Button $primary>OK</Button>
            <Button>Cancel</Button>
            <Button>Help</Button>
          </Footer>
        </DialogBody>
      </Dialog>
    </Desktop>
  );
}
